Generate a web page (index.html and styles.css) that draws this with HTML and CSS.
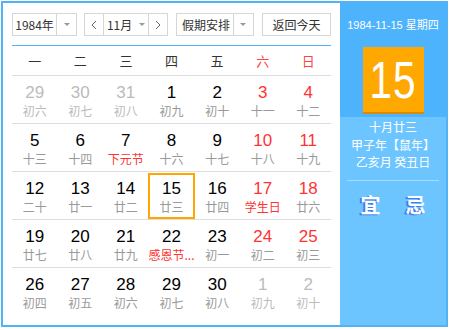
FILE: index.html
```html
<!DOCTYPE html>
<html lang="zh-CN">
<head>
    <meta charset="UTF-8">
    <title>万年历</title>
    <link rel="stylesheet" href="styles.css">
</head>
<body>
    <div class="calendar">
        <div class="main">
            <div class="toolbar">
                <div class="select year">
                    <span class="val">1984年</span>
                    <span class="drop"><i class="caret"></i></span>
                </div>
                <div class="month-box">
                    <a href="javascript:;" class="nav">
                        <svg width="6" height="10" viewBox="0 0 6 10"><polyline points="5,1 1,5 5,9" fill="none" stroke="#666" stroke-width="1"/></svg>
                    </a>
                    <div class="month"><span>11月</span><i class="caret"></i></div>
                    <a href="javascript:;" class="nav">
                        <svg width="6" height="10" viewBox="0 0 6 10"><polyline points="1,1 5,5 1,9" fill="none" stroke="#666" stroke-width="1"/></svg>
                    </a>
                </div>
                <div class="select holiday">
                    <span class="val">假期安排</span>
                    <span class="drop"><i class="caret"></i></span>
                </div>
                <a href="javascript:;" class="today-btn">返回今天</a>
            </div>

            <ul class="week">
                <li>一</li><li>二</li><li>三</li><li>四</li><li>五</li>
                <li class="we">六</li><li class="we">日</li>
            </ul>

            <ul class="days">
                <li class="other"><b>29</b><span>初六</span></li>
                <li class="other"><b>30</b><span>初七</span></li>
                <li class="other"><b>31</b><span>初八</span></li>
                <li><b>1</b><span>初九</span></li>
                <li><b>2</b><span>初十</span></li>
                <li class="we"><b>3</b><span>十一</span></li>
                <li class="we"><b>4</b><span>十二</span></li>

                <li><b>5</b><span>十三</span></li>
                <li><b>6</b><span>十四</span></li>
                <li><b>7</b><span class="fest">下元节</span></li>
                <li><b>8</b><span>十六</span></li>
                <li><b>9</b><span>十七</span></li>
                <li class="we"><b>10</b><span>十八</span></li>
                <li class="we"><b>11</b><span>十九</span></li>

                <li><b>12</b><span>二十</span></li>
                <li><b>13</b><span>廿一</span></li>
                <li><b>14</b><span>廿二</span></li>
                <li class="today"><div class="cell"><b>15</b><span>廿三</span></div></li>
                <li><b>16</b><span>廿四</span></li>
                <li class="we"><b>17</b><span class="fest">学生日</span></li>
                <li class="we"><b>18</b><span>廿六</span></li>

                <li><b>19</b><span>廿七</span></li>
                <li><b>20</b><span>廿八</span></li>
                <li><b>21</b><span>廿九</span></li>
                <li><b>22</b><span class="fest">感恩节...</span></li>
                <li><b>23</b><span>初一</span></li>
                <li class="we"><b>24</b><span>初二</span></li>
                <li class="we"><b>25</b><span>初三</span></li>

                <li class="last"><b>26</b><span>初四</span></li>
                <li class="last"><b>27</b><span>初五</span></li>
                <li class="last"><b>28</b><span>初六</span></li>
                <li class="last"><b>29</b><span>初七</span></li>
                <li class="last"><b>30</b><span>初八</span></li>
                <li class="last other"><b>1</b><span>初九</span></li>
                <li class="last other"><b>2</b><span>初十</span></li>
            </ul>
        </div>

        <div class="side">
            <div class="side-top">
                <p class="date">1984-11-15 星期四</p>
                <div class="big-day"><span>15</span></div>
            </div>
            <div class="side-bottom">
                <p>十月廿三</p>
                <p>甲子年【鼠年】</p>
                <p>乙亥月 癸丑日</p>
                <div class="yiji">
                    <span>宜</span>
                    <span>忌</span>
                </div>
            </div>
        </div>
    </div>
</body>
</html>
```

FILE: styles.css
```css
*{margin:0;padding:0;box-sizing:border-box;}
ul, li{list-style:none;}
a{text-decoration:none;color:#333;}

body{
    background:#fff;
    font-family:"Liberation Sans", "Noto Sans CJK SC", sans-serif;
}

.calendar{
    width:447px;height:326px;
    margin:1px 0 0 1px;
    border:2px solid #52b2f7;
    display:flex;
}

/* 왼쪽 달력 */
.main{
    width:337px;
    padding:10px 9px 0 9px;
    background:#fff;
}
.toolbar{
    display:flex;
    height:23px;
    font-size:12px;
    color:#333;
}
.select, .month-box, .today-btn{
    border:1px solid #d6d6d6;
    display:flex;
    align-items:center;
    background:#fff;
}
.select .val{
    flex:1;
    text-align:center;
    font-family:"Noto Sans CJK SC", sans-serif;
}
.select .drop{
    width:20px;height:100%;
    border-left:1px solid #d6d6d6;
    display:flex;align-items:center;justify-content:center;
}
.caret{
    display:block;
    width:0;height:0;
    border-left:3px solid transparent;
    border-right:3px solid transparent;
    border-top:3px solid #999;
}
.year{width:66px;}
.month-box{width:85px;margin-left:7px;}
.month-box .nav{
    width:18px;height:100%;
    display:flex;align-items:center;justify-content:center;
}
.month-box .nav svg{display:block;}
.month{
    flex:1;height:100%;
    border-left:1px solid #d6d6d6;
    border-right:1px solid #d6d6d6;
    display:flex;align-items:center;justify-content:center;
    gap:7px;
    font-family:"Noto Sans CJK SC", sans-serif;
}
.holiday{width:79px;margin-left:8px;}
.holiday .val{padding-left:2px;}
.today-btn{
    width:70px;margin-left:8px;
    justify-content:center;
    font-family:"Noto Sans CJK SC", sans-serif;
}

.week{
    margin-top:9px;
    border-top:1px solid #52b2f7;
    border-bottom:1px solid #ddd;
    display:grid;
    grid-template-columns:repeat(7, 1fr);
    height:31px;
}
.week li{
    text-align:center;
    line-height:29px;
    font-size:13px;
    color:#333;
    font-family:"Noto Sans CJK SC", sans-serif;
}
.week li.we{color:#f44;}

.days{
    display:grid;
    grid-template-columns:repeat(7, 1fr);
    grid-auto-rows:48px;
}
.days li{
    border-bottom:1px solid #ddd;
    text-align:center;
    padding-top:7px;
}
.days li.last{border-bottom:0;}
.days b{
    display:block;
    font-weight:normal;
    font-size:17px;
    line-height:20px;
    color:#000;
}
.days span{
    display:block;
    font-size:12px;
    line-height:16px;
    color:#999;
    font-family:"Noto Sans CJK SC", sans-serif;
    white-space:nowrap;
}
.days li.we b{color:#f33;}
.days li.other b{color:#bbb;}
.days li.other span{color:#bbb;}
.days span.fest{color:#f33;}

.days li.today{padding:1px 0 0 0;}
.today .cell{
    height:46px;
    border:2px solid #ffa600;
    padding-top:4px;
}

/* 오른쪽 */
.side{
    flex:1;
    display:flex;
    flex-direction:column;
    color:#fff;
    font-family:"Noto Sans CJK SC", sans-serif;
    text-align:center;
}
.side-top{
    height:114px;
    background:#4db3fd;
    padding-top:14px;
}
.date{
    font-size:11px;
    line-height:16px;
    font-family:"Liberation Sans", "Noto Sans CJK SC", sans-serif;
}
.big-day{
    width:61px;height:65px;
    margin:14px auto 0;
    background:#ffa800;
    box-shadow:0 2px 0 #d98a00;
    display:flex;align-items:center;justify-content:center;
}
.big-day span{
    font-family:"Liberation Sans", sans-serif;
    font-size:52px;
    line-height:52px;
    color:#fff;
    display:block;
    transform:scaleX(0.78);
    letter-spacing:1px;
}
.side-bottom{
    flex:1;
    background:#6dc5ff;
    padding:1px 7px 0;
}
.side-bottom p{
    font-size:12px;
    line-height:17.5px;
}
.yiji{
    margin-top:9px;
    border-top:1px solid #a7dcff;
    display:flex;
    justify-content:center;
    gap:25px;
    padding-top:12px;
}
.yiji span{
    font-size:20px;
    line-height:24px;
    font-weight:bold;
    text-shadow:-2px 1px 0 #4a78f0;
}
```
